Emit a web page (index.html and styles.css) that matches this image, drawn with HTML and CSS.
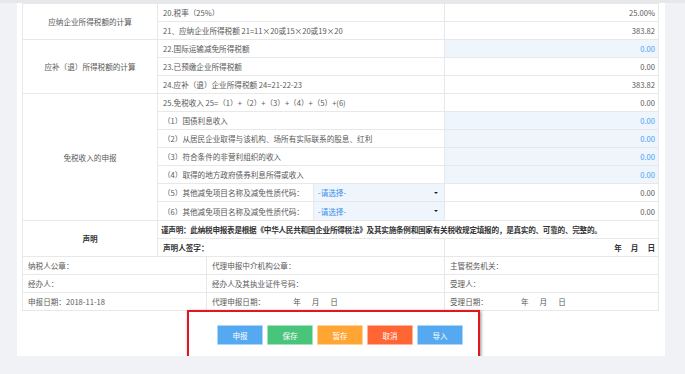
FILE: index.html
```html
<!DOCTYPE html>
<html lang="zh-CN">
<head>
    <meta charset="UTF-8">
    <meta name="viewport" content="width=device-width, initial-scale=1.0">
    <title>企业所得税申报</title>
    <link rel="stylesheet" href="styles.css">
</head>
<body>
<div class="top-strip"></div>
<div class="page">
    <table class="tax-table">
        <colgroup>
            <col class="c1"><col class="c2"><col class="c3"><col class="c4"><col class="c5">
        </colgroup>
        <tr>
            <td class="group" rowspan="2">应纳企业所得税额的计算</td>
            <td colspan="3">20.税率（25%）</td>
            <td class="num">25.00%</td>
        </tr>
        <tr>
            <td colspan="3">21、应纳企业所得税额 21=11×20或15×20或19×20</td>
            <td class="num">383.82</td>
        </tr>
        <tr>
            <td class="group" rowspan="3">应补（退）所得税额的计算</td>
            <td colspan="3">22.国际运输减免所得税额</td>
            <td class="num edit">0.00</td>
        </tr>
        <tr>
            <td colspan="3">23.已预缴企业所得税额</td>
            <td class="num">0.00</td>
        </tr>
        <tr>
            <td colspan="3">24.应补（退）企业所得税额 24=21-22-23</td>
            <td class="num">383.82</td>
        </tr>
        <tr>
            <td class="group" rowspan="7">免税收入的申报</td>
            <td colspan="3">25.免税收入 25=（1）+（2）+（3）+（4）+（5）+(6)</td>
            <td class="num">0.00</td>
        </tr>
        <tr>
            <td colspan="3">（1）国债利息收入</td>
            <td class="num edit">0.00</td>
        </tr>
        <tr>
            <td colspan="3">（2）从居民企业取得与该机构、场所有实际联系的股息、红利</td>
            <td class="num edit">0.00</td>
        </tr>
        <tr>
            <td colspan="3">（3）符合条件的非营利组织的收入</td>
            <td class="num edit">0.00</td>
        </tr>
        <tr>
            <td colspan="3">（4）取得的地方政府债券利息所得或收入</td>
            <td class="num edit">0.00</td>
        </tr>
        <tr>
            <td colspan="2">（5）其他减免项目名称及减免性质代码：</td>
            <td class="pick"><span class="pick-text">-请选择-</span><span class="caret"></span></td>
            <td class="num">0.00</td>
        </tr>
        <tr class="tall">
            <td colspan="2">（6）其他减免项目名称及减免性质代码：</td>
            <td class="pick"><span class="pick-text">-请选择-</span><span class="caret"></span></td>
            <td class="num">0.00</td>
        </tr>
        <tr>
            <td class="group strong" rowspan="2">声明</td>
            <td class="strong tight" colspan="4">谨声明：此纳税申报表是根据《中华人民共和国企业所得税法》及其实施条例和国家有关税收规定填报的，是真实的、可靠的、完整的。</td>
        </tr>
        <tr>
            <td class="strong" colspan="3">声明人签字：</td>
            <td class="num strong"><span class="date-right">年<i></i>月<i></i>日</span></td>
        </tr>
        <tr>
            <td colspan="2">纳税人公章：</td>
            <td colspan="2">代理申报中介机构公章：</td>
            <td>主管税务机关：</td>
        </tr>
        <tr>
            <td colspan="2">经办人：</td>
            <td colspan="2">经办人及其执业证件号码：</td>
            <td>受理人：</td>
        </tr>
        <tr>
            <td colspan="2">申报日期：2018-11-18</td>
            <td colspan="2">代理申报日期：<span class="date-blank a">年</span><span class="date-blank">月</span><span class="date-blank">日</span></td>
            <td>受理日期：<span class="date-blank b">年</span><span class="date-blank">月</span><span class="date-blank">日</span></td>
        </tr>
    </table>

    <div class="actions">
        <button class="btn btn-blue">申报</button>
        <button class="btn btn-green">保存</button>
        <button class="btn btn-orange">暂存</button>
        <button class="btn btn-red">取消</button>
        <button class="btn btn-blue">导入</button>
    </div>
</div>
<div class="mark"></div>
</body>
</html>
```

FILE: styles.css
```css
body {
    margin: 0;
    background-color: #f1f2f6;
    font-family: "Noto Sans CJK SC", "Noto Sans", sans-serif;
    font-size: 7.6px;
    color: #595959;
    position: relative;
}
.top-strip {
    height: 3px;
    background-color: #e6e7ea;
}
.page {
    width: 636px;
    margin-left: 17px;
    padding: 0 7px 0 5px;
    background-color: #fff;
}
.tax-table {
    width: 636px;
    table-layout: fixed;
    border-collapse: collapse;
}
.c1 { width: 135px; }
.c2 { width: 49px; }
.c3 { width: 107px; }
.c4 { width: 131px; }
.c5 { width: 214px; }
.tax-table td {
    height: 18px;
    padding: 0 3px 0 5px;
    border: 1px solid #e8e8e8;
    white-space: nowrap;
    overflow: hidden;
    box-sizing: border-box;
    vertical-align: middle;
}
.tax-table tr.tall td {
    height: 19px;
}
.tax-table td.group {
    text-align: center;
    padding: 0;
}
.tax-table td.num {
    text-align: right;
}
.tax-table td.edit {
    background-color: #eef5fd;
    color: #4a9ef2;
}
.tax-table td.pick {
    background-color: #eef5fd;
    color: #3b8fe8;
    position: relative;
    padding-left: 4px;
}
.caret {
    position: absolute;
    right: 6px;
    top: 8px;
    border-left: 2px solid transparent;
    border-right: 2px solid transparent;
    border-top: 2px solid #222;
}
.strong {
    font-weight: bold;
    color: #333;
}
.tax-table td.tight {
    padding-left: 3px;
    letter-spacing: -0.25px;
}
.date-right i {
    display: inline-block;
    width: 9px;
}
.date-blank {
    margin-left: 11px;
}
.date-blank.a {
    margin-left: 28px;
}
.date-blank.b {
    margin-left: 33px;
}
.actions {
    display: flex;
    justify-content: center;
    gap: 4px;
    padding: 14px 0 11px;
}
.btn {
    width: 46px;
    height: 20px;
    border: 1px solid rgba(255, 255, 255, 0.5);
    border-radius: 1px;
    color: #fff;
    font-family: inherit;
    font-size: 7.6px;
    padding: 0;
    cursor: pointer;
}
.btn-blue { background-color: #55a9f1; }
.btn-green { background-color: #48c47b; }
.btn-orange { background-color: #ffa533; }
.btn-red { background-color: #ff6633; }
.mark {
    position: absolute;
    left: 187px;
    top: 310px;
    width: 289px;
    height: 46px;
    border: 2px solid #e3161d;
    box-shadow: 1px 1px 3px rgba(0, 0, 0, 0.45);
}
```
